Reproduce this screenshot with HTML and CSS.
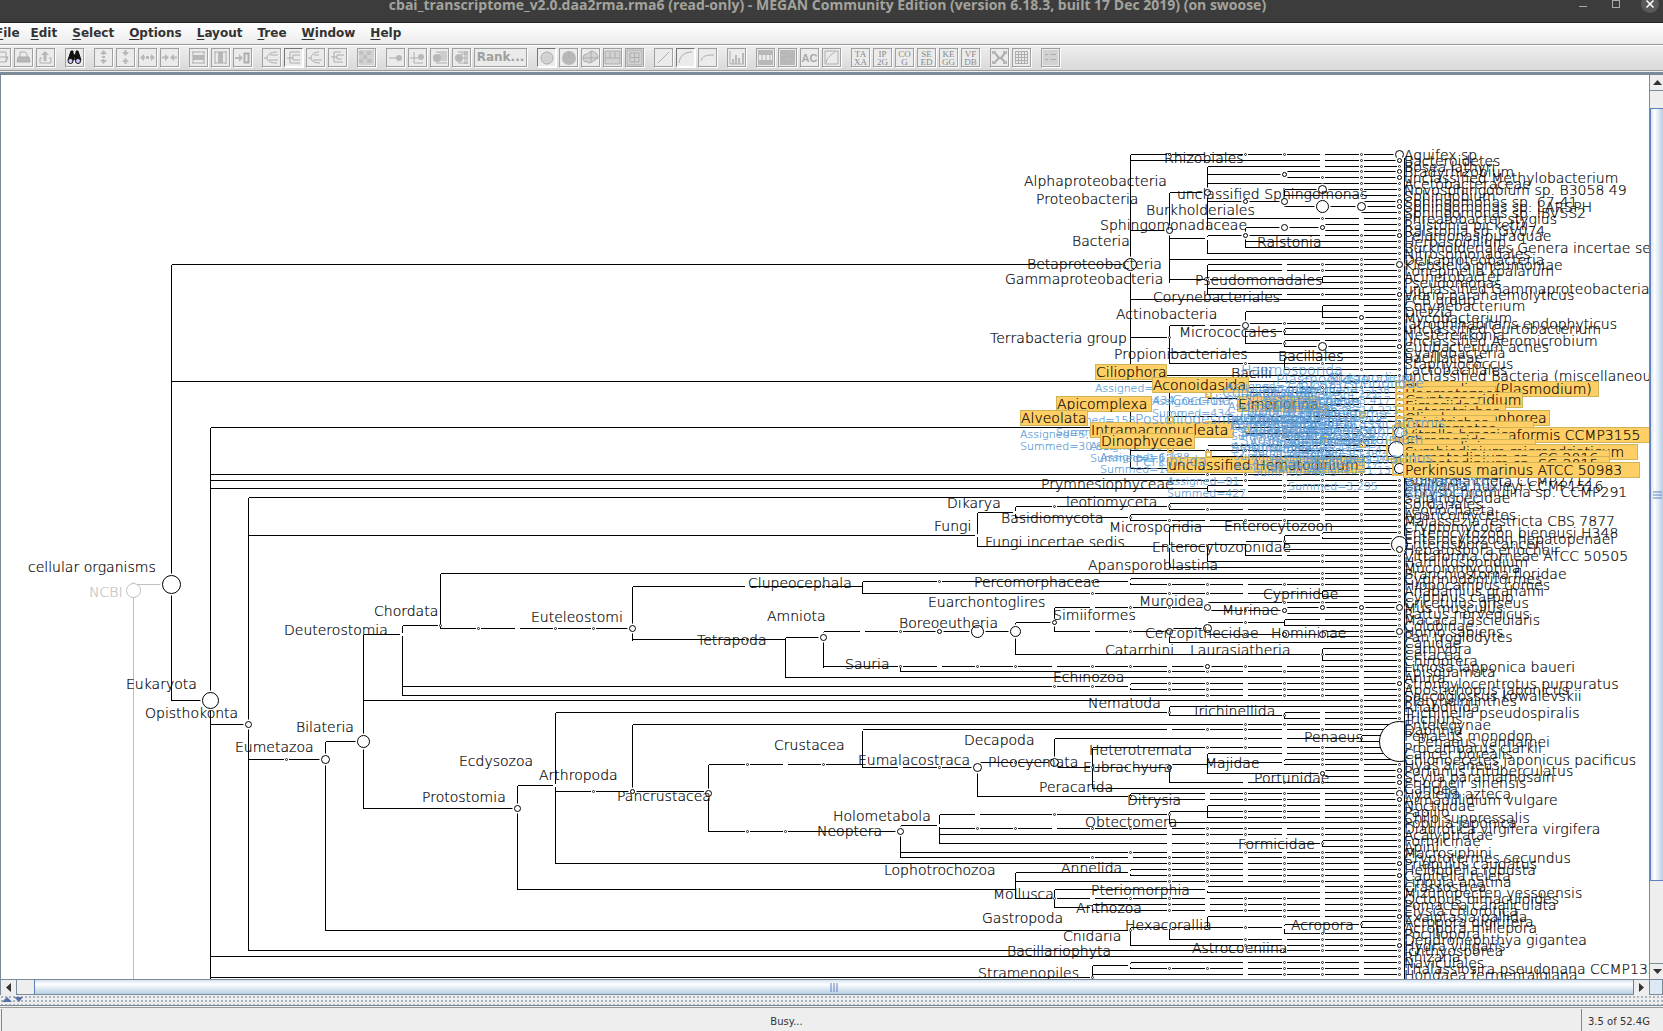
FILE: index.html
```html
<!DOCTYPE html>
<html lang="en">
<head>
<meta charset="utf-8">
<title>MEGAN Community Edition</title>
<link rel="stylesheet" href="styles.css">
</head>
<body>
<div class="window">
  <header class="titlebar">
    <h1 class="title">cbai_transcriptome_v2.0.daa2rma.rma6 (read-only) - MEGAN Community Edition (version 6.18.3, built 17 Dec 2019) (on swoose)</h1>
    <div class="window-buttons">
      <button class="wbtn" aria-label="Minimize"><svg width="16" height="22"><path d="M4 6.5h8" stroke="#aaa"/></svg></button>
      <button class="wbtn" aria-label="Maximize"><svg width="16" height="22"><rect x="4.500" y="0.500" width="7" height="7" fill="none" stroke="#aaa"/></svg></button>
      <button class="wbtn" aria-label="Close"><svg width="18" height="22"><circle cx="9" cy="4" r="9" fill="#5a5a5a"/><path d="M5.500 0.500l7 7m0-7l-7 7" stroke="#fff" stroke-width="1.500"/></svg></button>
    </div>
  </header>
  <nav class="menubar">
    <button><u>F</u>ile</button><button><u>E</u>dit</button><button><u>S</u>elect</button><button><u>O</u>ptions</button><button><u>L</u>ayout</button><button><u>T</u>ree</button><button><u>W</u>indow</button><button><u>H</u>elp</button>
  </nav>
  <div class="toolbar">
    <div class="group">
      <button class="tool" aria-label="Open"><svg><path d="M2 13V5h4l1-2h6v10zM4 13l3-5h8l-2 5"/></svg></button>
      <button class="tool" aria-label="Print"><svg><path class="f" d="M3 8h11l1 5H2z"/><path d="M5 8V3h5l2 2v3M3 8h11l1 5H2z"/></svg></button>
      <button class="tool" aria-label="Export"><svg><path class="f" d="M8 2l4 4H9.500v6h-3V6H4z"/><path d="M5 9H3v5h11V9h-2"/></svg></button>
    </div>
    <div class="group">
      <button class="tool" aria-label="Find"><svg><path d="M5 2h2v2l1 2h1l1-2V2h2l3 9H9V8H8v3H2z" fill="#111" stroke="#111"/><circle cx="4.500" cy="12" r="2.500" fill="#ccf" stroke="#111"/><circle cx="12" cy="12" r="2.500" fill="#ccf" stroke="#111"/></svg></button>
    </div>
    <div class="group">
      <button class="tool" aria-label="Expand vertical"><svg><path class="f" d="M8.500 1L12 5H9.500v1h-2V5H5zM8.500 15L12 11H9.500v-1h-2v1H5zM7 7h3v2H7z"/></svg></button>
      <button class="tool" aria-label="Contract vertical"><svg><path class="f" d="M8.500 7L12 3H9.500V1h-2v2H5zM8.500 9L12 13H9.500v2h-2v-2H5z"/></svg></button>
      <button class="tool" aria-label="Expand horizontal"><svg><path class="f" d="M1 8.500L5 5v2.500h1v2H5V12zM16 8.500L12 5v2.500h-1v2h1V12zM7 7h3v3H7z"/></svg></button>
      <button class="tool" aria-label="Contract horizontal"><svg><path class="f" d="M8 8.500L4 5v2.500H1v2h3V12zM9 8.500L13 5v2.500h3v2h-3V12z"/></svg></button>
    </div>
    <div class="group">
      <button class="tool" aria-label="Fit height"><svg><path class="f" d="M3 6h11v5H3z"/><path d="M2 3h13M2 14h13M3 3v11M14 3v11"/></svg></button>
      <button class="tool" aria-label="Fit width"><svg><path class="f" d="M6 3h5v11H6z"/><path d="M3 2v13M14 2v13M3 3h11M3 14h11"/></svg></button>
      <button class="tool" aria-label="Scroll to"><svg><path class="f" d="M1 8h4V5l4 4-4 4v-3H1z"/><path d="M10.500 4.500h4v9h-4z" stroke-width="2"/></svg></button>
    </div>
    <div class="group">
      <button class="tool" aria-label="Cladogram"><svg><path d="M1 9h3c0-3 3-6 10-6M4 9c0 3 3 5 10 5M7 6h8M6 11h9"/></svg></button>
      <button class="tool on" aria-label="Rectangular cladogram"><svg><path d="M2 9h3M5 3v11M5 3h10M5 14h10M8 6v5M5 9h3M8 6h7M8 11h7"/></svg></button>
      <button class="tool" aria-label="Phylogram"><svg><path d="M1 9h3c0-3 3-6 8-6M4 9c0 3 3 5 9 5M7 6h5M6 11h9"/></svg></button>
      <button class="tool" aria-label="Rectangular phylogram"><svg><path d="M2 8h3M5 3v10M5 3h7M5 13h9M8 6v4M5 8h3M8 6h7M8 10h5"/></svg></button>
    </div>
    <div class="group">
      <button class="tool" aria-label="Color"><svg><path class="p" stroke="none" d="M1 1h15v15H1z"/><path fill="#c0c0c0" stroke="none" d="M1 2h4v4H1zM9 2h4v4H9zM5 6h4v4H5zM1 10h4v4H1zM9 10h5v4H9z"/></svg></button>
    </div>
    <div class="group">
      <button class="tool" aria-label="Collapse"><svg><path d="M2 9h8"/><circle class="f" cx="12" cy="9" r="3"/></svg></button>
      <button class="tool" aria-label="Uncollapse"><svg><path d="M1 9h8M5 3v11h9"/><circle class="f" cx="12" cy="8" r="3"/></svg></button>
      <button class="tool" aria-label="Uncollapse subtree"><svg><path d="M5 3h11M8 5h8M8 7h8M8 9h8M8 11h8M5 14h11"/><circle class="f" cx="6" cy="9" r="4"/></svg></button>
      <button class="tool" aria-label="Collapse at rank"><svg><path d="M5 3h10M8 5h7M8 9h7M5 14h10M12 2v13M14 2v13"/><circle class="f" cx="6" cy="9" r="4"/></svg></button>
      <button class="tool rank">Rank...</button>
    </div>
    <div class="group">
      <button class="tool on" aria-label="Circles"><svg><circle class="p" cx="9" cy="9" r="6"/></svg></button>
      <button class="tool" aria-label="Pies"><svg><circle class="f" cx="9" cy="9" r="7"/><path d="M9 9V2"/></svg></button>
      <button class="tool" aria-label="Coxcombs"><svg><path class="p" d="M9 2a7 7 0 0 1 7 7l-6 4a4 4 0 0 1-5 0 4 4 0 0 1 0-8z"/><path d="M9 2v12M2 9h14"/></svg></button>
      <button class="tool" aria-label="Bars"><svg><path class="p" d="M1 2h15v13H1z"/><path d="M6 3v6M11 3v6M1 9h15"/></svg></button>
      <button class="tool" aria-label="Heatmaps"><svg><path class="p" d="M1 1h15v15H1z"/><path d="M4 4h9v9H4zM8.500 4v9M4 8.500h9"/></svg></button>
    </div>
    <div class="group">
      <button class="tool" aria-label="Linear scale"><svg><path d="M3 14L14 3"/></svg></button>
      <button class="tool on" aria-label="Square root scale"><svg><path d="M2 14C3 7 7 3 15 3"/></svg></button>
      <button class="tool" aria-label="Log scale"><svg><path d="M2 12C3 7 7 6 15 6"/></svg></button>
    </div>
    <div class="group">
      <button class="tool" aria-label="Chart"><svg><path d="M2 2v13h14"/><path class="f" d="M4 10h2v5H4zM7 6h2v9H7zM10 9h2v6h-2zM14 4h2v11h-2z"/></svg></button>
    </div>
    <div class="group">
      <button class="tool" aria-label="Samples"><svg><path class="f" d="M1 1h15v15H1z"/><path stroke="none" d="M2 6h13v5H2z" fill="#eee"/><path d="M5 6v5M9 6v5M13 6v5"/></svg></button>
      <button class="tool" aria-label="Heatmap"><svg><path class="f" d="M1 1h15v15H1z"/><path stroke="#c4c4c4" d="M2 6h4M9 3h4M6 10h4"/></svg></button>
      <button class="tool letters big" aria-label="Alignment">AC</button>
      <button class="tool" aria-label="Rarefaction"><svg><path d="M2 2h13v13H2zM3 14c1-6 5-8 9-11"/></svg></button>
    </div>
    <div class="group">
      <button class="tool letters">TA<br>XA</button><button class="tool letters">IP<br>2G</button><button class="tool letters">CO<br>G</button><button class="tool letters">SE<br>ED</button><button class="tool letters">KE<br>GG</button><button class="tool letters">VF<br>DB</button>
    </div>
    <div class="group">
      <button class="tool" aria-label="Network"><svg><path d="M3 3l5 6h2l5-6M3 14l5-5M15 14l-5-5" stroke-width="2"/><path class="f" d="M1 2h4v3H1zM12 2h4v3h-4zM1 12h4v3H1zM12 12h4v3h-4z"/></svg></button>
      <button class="tool" aria-label="Table"><svg><path d="M2.500 2.500h12v12h-12zM2 5.500h13M2 8.500h13M2 11.500h13M5.500 3v12M8.500 3v12M11.500 3v12"/></svg></button>
    </div>
    <div class="group">
      <button class="tool" aria-label="Inspector"><svg><path class="p" stroke="none" d="M1 1h15v15H1z"/><path d="M3 5.500h3M3 10.500h3M8 5.500h6M8 10.500h6"/></svg></button>
    </div>
  </div>
  <main class="viewer">
    <div class="canvas"><svg class="tree" id="tree" role="img" aria-label="Taxonomy tree"></svg></div>
    <div class="vscroll">
      <button class="arrow" aria-label="Scroll up"><svg width="9" height="6"><path d="M0 5l4.500-5L9 5z"/></svg></button>
      <div class="vtrack"><div class="vthumb"><svg width="9" height="8"><path d="M0 1h9M0 4h9M0 7h9" stroke="#5f80bd"/></svg></div></div>
      <button class="arrow" aria-label="Scroll down"><svg width="9" height="6"><path d="M0 0l4.500 5L9 0z"/></svg></button>
    </div>
    <div class="hscroll">
      <button class="arrow" aria-label="Scroll left"><svg width="6" height="9"><path d="M5 0L0 4.500 5 9z"/></svg></button>
      <div class="htrack"><div class="hthumb"><svg width="8" height="9"><path d="M1 0v9M4 0v9M7 0v9" stroke="#5f80bd"/></svg></div></div>
      <button class="arrow" aria-label="Scroll right"><svg width="6" height="9"><path d="M0 0l5 4.500L0 9z"/></svg></button>
    </div>
    <div class="corner"></div>
  </main>
  <div class="splitter"><svg width="22" height="6"><path d="M0 5l5-5 5 5z" fill="#5670a8"/><path d="M12 0h9l-4 5z" fill="#5670a8"/></svg></div>
  <footer class="status">
    <div class="message">Busy...</div>
    <div class="memory">3.5 of 52.4G</div>
  </footer>
</div>
<script src="tree.js"></script>
</body>
</html>
```
FILE: styles.css
```css
* { box-sizing: border-box; }
body { margin: 0; font-family: "DejaVu Sans", sans-serif; color: #333; background: #eee; }
button { font: inherit; color: inherit; border: 0; padding: 0; background: none; }
.window { display: flex; flex-direction: column; height: 100vh; overflow: hidden; }

.titlebar { display: flex; flex: none; height: 23px; background: #3c3c3c; border-bottom: 1px solid #222; overflow: hidden; }
.title { flex: 1; margin: 0; padding-left: 80px; text-align: center; white-space: nowrap; font: 700 14px/10px "Open Sans", "Noto Sans", sans-serif; color: #a3a39c; }
.window-buttons { display: flex; gap: 17px; padding-right: 4px; }
.wbtn { display: flex; }

.menubar { display: flex; flex: none; gap: 15px; height: 22px; border-bottom: 1px solid #999; background: linear-gradient(#fff, #ececec); overflow: hidden; }
.menubar button { font-size: 12px; font-weight: 700; line-height: 18px; padding-bottom: 2px; white-space: nowrap; }
.menubar button:first-child { margin: 0 -4px 0 -5px; }
.menubar u { text-underline-offset: 2px; }

.toolbar { display: flex; flex: none; gap: 10px; height: 26px; padding-top: 2px; border-top: 1px solid #fff; border-bottom: 1px solid #999; background: linear-gradient(#eee, #d9d9d9); overflow: hidden; }
.group { display: flex; flex: none; gap: 3px; }
.group:first-child { margin-left: -8px; }
.tool { width: 19px; height: 19px; flex: none; background: #ebebeb; border: 1px solid #a0a0a0; box-shadow: 1px 1px 0 #fff; }
.tool.on { border-color: #777 #fff #fff #777; }
.tool svg { display: block; width: 17px; height: 17px; fill: none; stroke: #adadad; }
.tool .f { fill: #b8b8b8; stroke: none; }
.tool .p { fill: #d2d2d2; }
.rank { width: 53px; font-size: 12px; line-height: 17px; font-weight: 700; color: #a0a0a0; }
.letters { font: 400 9px/8px "Liberation Serif", serif; color: #888; text-align: center; overflow: hidden; }
.letters.big { font: 700 11px/16px "Liberation Sans", sans-serif; color: #aaa; }

.viewer { flex: 1; min-height: 0; display: grid; grid-template: minmax(0, 1fr) 16px / minmax(0, 1fr) 14px; border-top: 3px solid #7a8a99; border-left: 1px solid #7a8a99; margin-top: 1px; }
.canvas { background: #fff; overflow: hidden; }
.tree { display: block; width: 100%; height: 100%; font-size: 14px; font-weight: 200; font-family: "DejaVu Sans Light", "DejaVu Sans", sans-serif; }
.tree text { white-space: pre; fill: #000; stroke: #000; stroke-width: 0.2; }
.lines { fill: none; stroke: #000; shape-rendering: crispEdges; }
.root-line { fill: none; stroke: #c0c0c0; shape-rendering: crispEdges; }
.gap { stroke: #fff; stroke-width: 3; fill: none; shape-rendering: crispEdges; }
.tip { fill: #fff; stroke: #222; }
.node { fill: #fff; stroke: #000; }
.node.root { stroke: #c0c0c0; }
.tree .root-name { fill: #c0c0c0; stroke: #c0c0c0; }
.halo { fill: #fff; }
.box { fill: #ffcf66; stroke: #d0b458; shape-rendering: crispEdges; }
.frame { fill: none; stroke: #e8bd55; stroke-width: 2; shape-rendering: crispEdges; }
.tree .hit { fill: #5b9bd5; stroke: #5b9bd5; }
.tree .count { fill: #5b9bd5; stroke: #5b9bd5; font-size: 11px; }

.arrow { display: flex; align-items: center; justify-content: center; flex: none; width: 15px; height: 15px; background: #eee; fill: #333; }
.vscroll { display: flex; flex-direction: column; border-left: 1px solid #7a8a99; background: #eee; }
.vtrack { flex: 1; padding: 17px 0 82px; border: solid #7a8a99; border-width: 1px 0; }
.vthumb { display: flex; align-items: center; justify-content: center; height: 100%; border: 1px solid #5f80bd; border-right: 0; background: linear-gradient(90deg, #d5e3f0, #fff 30%, #b8cfe5); }
.hscroll { display: flex; border: 1px solid #7a8a99; border-width: 1px 0; background: #eee; }
.htrack { flex: 1; padding-left: 17px; border-left: 1px solid #7a8a99; }
.hthumb { display: flex; align-items: center; justify-content: center; height: 14px; border: 1px solid #5f80bd; border-width: 0 1px; background: linear-gradient(#d5e3f0, #fff 30%, #b8cfe5); }
.corner { border: 1px solid #7a8a99; background: #dce8f3; }
.splitter { flex: none; height: 11px; padding: 2px; border-bottom: 1px solid #7a8a99; background: radial-gradient(circle, #a9b4bf 1px, transparent 1px) 0 0 / 4px 4px #eee; }
.splitter svg { display: block; }
.status { display: flex; flex: none; height: 24px; margin-top: 1px; border-top: 1px solid #999; font-size: 10px; line-height: 24px; background: #eee; }
.message { flex: 1; padding: 1px 10px 0 0; text-align: center; margin: 1px 0 0 1px; border: solid #7a8a99; border-width: 0 1px; }
.memory { width: 81px; padding: 2px 0 0 6px; white-space: nowrap; }
```
FILE: tree.js
```js
// Canvas geometry: 34 levels across, 142 leaf rows down, in pane coordinates.
const LEFT = 1, TOP = 75;
const X = k => 133 - LEFT + Math.round(38.36 * k) + 0.5;
const Y = y => Math.floor(y) - TOP + 0.5;
const R = n => 154 + Math.round(5.813 * n);

// Leaves: level where the edge starts, first level with a tick, name.
const leaves = `26,27,Aquifex sp.|26,31,Bacteroidetes|28,31,Bosea lathyri|30,32,Bradyrhizobium|30,31,unclassified Methylobacterium|28,32,Acetobacteraceae|30,31,Novosphingobium sp. B3058 49|30,32,Sphingobium|32,33,Sphingomonas sp. 67-41|32,33,Sphingomonas sp. LARSPH|32,33,Sphingomonas sp. IBVSS2|28,31,Phreatobacter stygius|31,32,Ralstonia pickettii|31,32,Ralstonia sp. GV074|29,31,Pelomonas puraquae|29,32,Herbaspirillum|29,32,Burkholderiales Genera incertae sedis|28,33,Nitrosomonadales|27,32,Deltaproteobacteria|28,30,Klebsiella pneumoniae|28,30,Lonepinella koalarum|31,32,Acinetobacter|31,32,Pseudomonas|28,32,unclassified Gammaproteobacteria|28,30,Vibrio parahaemolyticus|26,33,FCB group|31,32,Corynebacterium|31,32,Dietzia|31,32,Mycobacterium|29,30,Jatrophihabitans endophyticus|30,31,unclassified Curtobacterium|30,32,Nesterenkonia|30,31,unclassified Aeromicrobium|30,32,Cutibacterium acnes|27,32,Cyanobacteria|30,32,Bacillaceae|29,31,Staphylococcus|30,32,Lactobacillales|26,33,unclassified Bacteria (miscellaneous)|1,33,|28,30,|29,31,|28,29,|30,32,|29,31,|27,29,|28,31,|2,30,|29,32,|30,31,|28,30,|26,28,|28,31,|27,29,|26,30,|2,28,Dictyosteliida|2,28,Guillardia theta CCMP2712|28,29,Emiliania huxleyi CCMP1516|28,29,Chrysochromulina sp. CCMP291|3,30,Salpingoecidae|27,31,Sordariales|27,28,Leotiochaeta|26,31,Agaricomycetes|26,27,Malassezia restricta CBS 7877|27,33,Cryptomycota|31,32,Enterocytozoon bieneusi H348|31,32,Enterocytozoon hepatopenaei|30,32,Enterospora canceri|30,32,Hepatospora eriocheir|29,30,Vittaforma corneae ATCC 50505|28,31,Hamiltosporidium|27,32,Mucoromycotina|8,31,Branchiostoma floridae|26,31,Cyprinodontiformes|26,27,Hippocampus comes|31,32,Anabarilius grahami|31,32,Cyprinus carpio|28,30,Cricetulus griseus|30,31,Mus musculus|30,32,Rattus norvegicus|30,31,Macaca fascicularis|30,32,Colobinae|31,32,Homo sapiens|31,32,Pan troglodytes|27,32,Canidae|31,32,Carnivora|31,32,Cetacea|31,32,Chiroptera|20,21,Limosa lapponica baueri|20,27,Episquamata|17,31,Anura|26,27,Strongylocentrotus purpuratus|26,27,Apostichopus japonicus|7,28,Saccoglossus kowalevskii|6,32,Platyhelminthes|27,32,Rhabditida|30,31,Trichinella pseudospiralis|30,31,Trichuris|13,29,Entelegynae|19,27,Daphnia|32,33,Penaeus monodon|32,33,   Penaeus vannamei|25,28,Procambarus clarkii|28,30,Cancer borealis|30,31,Chionoecetes japonicus pacificus|30,31,Hyas araneus|31,32,Portunus trituberculatus|31,32,Scylla paramamosain|27,29,Eriocheir sinensis|25,33,Caridea|26,28,Hyalella azteca|26,28,Armadillidium vulgare|28,30,Noctuidae|28,29,Papilio|28,29,Chilo suppressalis|27,33,Popillia japonica|21,22,Diabrotica virgifera virgifera|21,27,Acalyptratae|31,32,Formicinae|31,32,Apini|20,26,Macrosiphini|20,25,Cryptotermes secundus|11,27,Priapulus caudatus|26,27,Helobdella robusta|26,27,Capitella teleta|23,27,Lingula anatina|28,31,Crassostrea|28,31,Mizuhopecten yessoensis|24,25,Octopus bimaculoides|25,27,Pomacea canaliculata|25,27,Elysia chlorotica|28,30,Exaiptasia pallida|32,33,Acropora digitifera|32,33,Acropora millepora|30,31,Pocillopora|27,29,Dendronephthya gigantea|26,29,Hydra vulgaris|3,29,Ichthyosporea|2,33,Rhizaria|26,29,Naviculales|26,27,Thalassiosira pseudonana CCMP1335|25,29,Hondaea fermentalgiana`
  .split('|').map(s => s.split(','));

// Inner horizontal edges: from level, to level, y, levels with a tick.
const across = [
  [1,26,264],[28,30,174],[27,28,192],[28,30,201],[30,32,206],[26,27,230],[27,28,238,28],[28,29,235],[29,31,227],[27,31,279,28],
  [26,27,337,27],[27,29,325,28],[29,31,311],[29,30,331,30],[29,30,343,30],[27,30,363,29],[26,28,450],[2,28,488],[2,26,427],
  [3,22,535,22],[22,23,512,23],[23,27,506,24,26,27],[23,26,517,26],[22,28,546,27,28],[28,29,544],[29,30,541,30],[30,31,535,31],
  [13,19,586,16,18],[19,26,581,21,25,26],[19,31,593,25,27,28,29],[8,13,628,9,10,11,12],[13,17,639,16],[17,18,637],[18,23,631,19,20],
  [18,20,666,20],[23,24,622],[24,28,607,25,26,27],[28,30,610,29],[28,30,622,29],[27,28,628],[28,31,634,29],[24,27,631,25,26],[23,31,654,31],
  [7,26,686,24,25,26],[11,27,712,27],[27,30,715,30],[1,2,700],[2,3,724],[3,5,759,4],[5,6,741],[6,7,634,7],[7,8,625,8],[6,10,808],[10,11,785,11],
  [11,15,791,12],[15,19,764,16,17,18],[19,22,767,20,21],[22,24,762,23],[24,32,738,29,30,32],[24,27,767,25,26],[27,28,764],[28,30,762,30],[28,31,773],
  [22,26,796,26],[15,20,831,16,17],[20,21,825,21],[21,27,814,22,24,27],[27,28,811],[21,31,843,27,28,29,31],
  [10,23,889],[23,26,872,26],[23,24,898,24],[24,28,889,28],[24,25,907,25],[5,26,930,26],[26,30,927,27,29,30],[30,32,924,32],[2,25,977,25],[25,26,965,26]];
// Inner vertical edges: level, top, bottom.
const down = [
  [1,264,700],[2,427,979],[3,497,950],[5,741,930],[6,634,808],[7,625,695],[8,573,628],[10,785,889],[11,712,863],[13,586,640],[13,724,791],[15,764,831],
  [17,637,677],[18,631,667],[19,581,593],[19,730,767],[20,666,671],[20,825,857],[21,814,843],[22,512,546],[22,762,796],[23,506,517],[23,622,654],[23,872,898],
  [24,607,631],[24,738,767],[24,889,907],[25,747,788],[25,904,910],[25,965,979],[26,154,375],[26,410,468],[26,514,520],[26,578,584],[26,683,689],[26,793,799],[26,869,875],[26,927,945],[26,962,968],
  [27,192,282],[27,325,363],[27,392,424],[27,503,509],[27,526,567],[27,628,642],[27,706,715],[27,764,782],[27,811,823],[27,927,939],[28,166,228],[28,235,253],[28,264,294],[28,485,491],[28,544,561],[28,602,610],
  [28,622,634],[28,753,773],[28,805,817],[28,887,892],[28,916,927],[29,227,247],[29,311,343],[29,544,555],[30,171,177],[30,189,206],[30,328,334],[30,340,346],[30,357,369],[30,535,547],[30,607,613],[30,619,625],
  [30,712,718],[30,759,764],[30,924,933],[31,224,230],[31,276,282],[31,305,317],[31,532,538],[31,590,596],[31,630,637],[31,648,660],[31,770,776],[31,840,846],[32,201,212],[32,735,741],[32,921,927]];
// Nodes: level, y, radius.
const nodes = [
  [1,584,9],[2,700,8],[3,724,3],[5,759,4],[6,741,6],[10,808,3],[13,628,3],[13,791,2],[15,793,3],[18,637,3],[21,631,2],[22,631,6],[23,631,5],[24,622,2],
  [22,767,4],[24,762,4],[20,831,3],[26,264,6],[27,230,3],[28,192,3],[30,174,2],[29,201,2],[30,201,3],[31,189,4],[31,206,6],[32,206,4],[30,227,3],[31,227,2],[29,235,2],
  [29,325,3],[31,346,4],[32,317,2],[28,607,3],[30,610,2],[31,607,2],[32,607,2],[28,628,4],[27,631,3],[30,634,2],[31,634,3],[28,666,2],[31,773,2],[27,767,2],
  [33,154,4],[33,160,2],[33,171,2],[33,177,2],[33,201,2],[33,206,2],[33,235,2],[33,264,3],[33,294,2],[33,346,2],[33,544,8],[33,549,3],[33,607,3],[33,631,3],[33,683,2],
  [33,770,2],[33,776,2],[33,782,2],[33,793,3],[33,799,2],[33,863,2],[33,875,2],[33,916,2],[33,945,2]];

const labels = `1164,163,Rhizobiales|1024,186,Alphaproteobacteria|1036,204,Proteobacteria|1177,199,unclassified Sphingomonas|1146,215,Burkholderiales|1100,230,Sphingomonadaceae|1072,246,Bacteria|1257,247,Ralstonia|1027,269,Betaproteobacteria|1005,284,Gammaproteobacteria|1195,285,Pseudomonadales|1153,302,Corynebacteriales|1116,319,Actinobacteria|1179,337,Micrococcales|990,343,Terrabacteria group|1114,359,Propionibacteriales|1278,361,Bacillales|1231,378,Bacilli|1041,489,Prymnesiophyceae|1066,507,leotiomyceta|947,508,Dikarya|1001,523,Basidiomycota|934,531,Fungi|1109,532,Microsporidia|1224,531,Enterocytozoon|985,547,Fungi incertae sedis|1152,552,Enterocytozoonidae|1088,570,Apansporoblastina|974,587,Percomorphaceae|1263,599,Cyprinidae|928,607,Euarchontoglires|1139,606,Muroidea|1222,615,Murinae|1053,620,Simiiformes|899,628,Boreoeutheria|1145,638,Cercopithecidae|1271,638,Homininae|1105,655,Catarrhini|1190,655,Laurasiatheria|1053,682,Echinozoa|1088,708,Nematoda|1192,716,Trichinellida|964,745,Decapoda|1304,742,Penaeus|1089,755,Heterotremata|858,765,Eumalacostraca|988,767,Pleocyemata|1083,772,Eubrachyura|1205,768,Majidae|1254,783,Portunidae|1039,792,Peracarida|1127,805,Ditrysia|833,821,Holometabola|1085,827,Obtectomera|817,836,Neoptera|1238,849,Formicidae|884,875,Lophotrochozoa|1061,873,Annelida|1091,895,Pteriomorphia|993,899,Mollusca|1076,913,Anthozoa|982,923,Gastropoda|1125,930,Hexacorallia|1291,930,Acropora|1063,941,Cnidaria|1192,953,Astrocoeniina|1007,956,Bacillariophyta|978,978,Stramenopiles|28,572,cellular organisms|374,616,Chordata|284,635,Deuterostomia|126,689,Eukaryota|145,718,Opisthokonta|296,732,Bilateria|235,752,Eumetazoa|459,766,Ecdysozoa|422,802,Protostomia|748,588,Clupeocephala|531,622,Euteleostomi|767,621,Amniota|697,645,Tetrapoda|845,669,Sauria|539,780,Arthropoda|617,801,Pancrustacea|774,750,Crustacea`
  .split('|').map(s => s.split(','));

// Selected clades: box x, top, width, name, assigned, summed.
const selected = [
  [1056,396,95,'Apicomplexa','158','8,435'],[1020,410,67,'Alveolata','5,052','30,612'],[1095,364,71,'Ciliophora','116','434'],[1152,377,96,'Aconoidasida','19','434'],
  [1237,396,82,'Eimeriorina','46','2,263'],[1090,422,143,'Intramacronucleata','10','1,138'],[1100,433,94,'Dinophyceae','6,138','14,221'],[1167,457,197,'unclassified Hematodinium','91','427']];
const selectedLeaves = [
  [381,195,'Plasmodium (Plasmodium)'],[386,92,'Haematozoea'],[392,119,'Cryptosporidium'],[398,75,'Eimeriidae'],[404,102,'Heterotrichea'],[410,146,'Oligohymenophorea'],[415,92,'Spirotrichea'],
  [421,130,'Litostomatea'],[427,260,'Vitrella brassicaformis CCMP3155'],[433,106,'Chromerida'],[439,132,'Gymnodiniaceae'],[444,234,'Symbiodinium microadriaticum'],[450,206,'Hematodinium sp. CC-2016'],[456,206,'Hematodinium sp. SG-2015'],[462,236,'Perkinsus marinus ATCC 50983']];
const hits = [
  [1241,375,'Haemosporida'],[1276,384,'Plasmodiidae'],[1329,383,'Plasmodium'],[1300,388,'Cryptosporidiidae'],[1222,397,'Conoidasida'],[1172,405,'Coccidia'],[1262,407,'Sarcocystidae'],
  [1135,424,'Postciliodesmatophora'],[1240,416,'Hypotrichia'],[1306,419,'Toxoplasma'],[1290,428,'Vitrella brassicaformis'],[1230,430,'Gymnodiniales'],[1240,437,'Suessiales'],[1320,444,'Hematodinium'],
  [1240,445,'Symbiodiniaceae'],[1230,453,'Syndiniales'],[1135,466,'Perkinsida'],[1305,463,'Perkinsus marinus'],[1226,424,'Peridiniales'],[1310,436,'Amoebophrya']];

const out = [];
const put = (tag, attrs, body = '') => out.push(`<${tag} ${Object.entries(attrs).map(([k, v]) => `${k}="${v}"`).join(' ')}>${body}</${tag}>`);
const text = (x, y, s, cls) => put('text', { x: x - LEFT, y: y - TOP, ...(cls && { class: cls }) }, s);

const ticks = [];
let d = '';
leaves.forEach(([from, tick], n) => {
  const y = R(n);
  d += `M${X(+from)} ${Y(y)}H${X(33)}`;
  for (let k = +tick; k <= 33; k++) ticks.push([k, y]);
});
across.forEach(([a, b, y, ...t]) => {
  d += `M${X(a)} ${Y(y)}H${X(b)}`;
  t.forEach(k => ticks.push([k, y]));
});
down.forEach(([k, a, b]) => { d += `M${X(k)} ${Y(a)}V${Y(b)}`; });

put('path', { class: 'root-line', d: `M${X(0)} ${Y(581)}V${Y(979)}M${X(0)} ${Y(584)}H${X(1)}` });
put('path', { class: 'lines', d });
put('path', { class: 'gap', d: ticks.map(([k, y]) => `M${X(k) - 2.5} ${Y(y)}h5`).join('') });
ticks.forEach(([k, y]) => {
  if (k === 33 || (y * 7 + k * 5) % 3) put('circle', { class: 'tip', cx: X(k), cy: Y(y), r: 1 });
});
put('circle', { class: 'node root', cx: X(0), cy: Y(590), r: 7 });
put('circle', { class: 'node', cx: X(33), cy: Y(741), r: 20 });
put('rect', { class: 'halo', x: X(33) + 5, y: Y(719), width: 20, height: 44 });
put('path', { class: 'lines', d: `M${X(33) + 5} ${Y(157)}V${Y(979)}` });
nodes.forEach(([k, y, r]) => {
  put('circle', { class: 'halo', cx: X(k), cy: Y(y), r: r + 2 });
  put('circle', { class: 'node', cx: X(k), cy: Y(y), r });
});
text(89, 597, 'NCBI', 'root-name');
labels.forEach(([x, y, s]) => text(+x, +y, s));
leaves.forEach(([, , s], n) => { if (s) text(1404, R(n) + 6, s); });

for (let i = 0; i < 15; i++) {
  put('rect', { class: 'frame', x: X(33) - 4, y: Y(380 + i * 6), width: 8, height: 7 });
  put('rect', { class: 'frame', x: X(27 + i % 6) - 2, y: Y(386 + i * 5), width: 5, height: 5 });
}
selected.forEach(([x, y, w, s, a, m]) => {
  text(x, y + 28, 'Assigned=' + a, 'count');
  text(x, y + 40, 'Summed=' + m, 'count');
});
const counts = ['7,422', '263', '1,138', '46', '14,221', '3,295', '902', '5,417'];
text(1288, 490, 'Summed=3,295', 'count');
for (let i = 0; i < 4; i++) text(1406, 480 + i * 6, 'Assigned=' + counts[i], 'count');
selected.forEach(([x, y, w, s]) => {
  put('rect', { class: 'box', x: x - LEFT + 0.5, y: Y(y), width: w, height: 15 });
  text(x + 1, y + 13, s);
});
for (let i = 0; i < 44; i++) {
  const x = 1226 + (i * 37) % 92, y = 390 + i * 2;
  text(x, y, (i % 2 ? 'Summed=' : 'Assigned=') + counts[i % 8], 'count');
}
[[0, 432, 5], [-3, 449, 8], [0, 468, 5]].forEach(([dx, y, r]) => {
  put('rect', { class: 'frame', x: X(33) + dx - r - 2, y: Y(y) - r - 2, width: 2 * r + 3, height: 2 * r + 3 });
  put('circle', { class: 'node', cx: X(33) + dx, cy: Y(y), r });
});
selectedLeaves.forEach(([y, w, s]) => {
  put('rect', { class: 'box', x: 1403.5 - LEFT, y: Y(y), width: w, height: 15 });
  text(1405, y + 13, s);
});
hits.forEach(([x, y, s]) => text(x, y, s, 'hit'));
document.getElementById('tree').innerHTML = out.join('');
```
